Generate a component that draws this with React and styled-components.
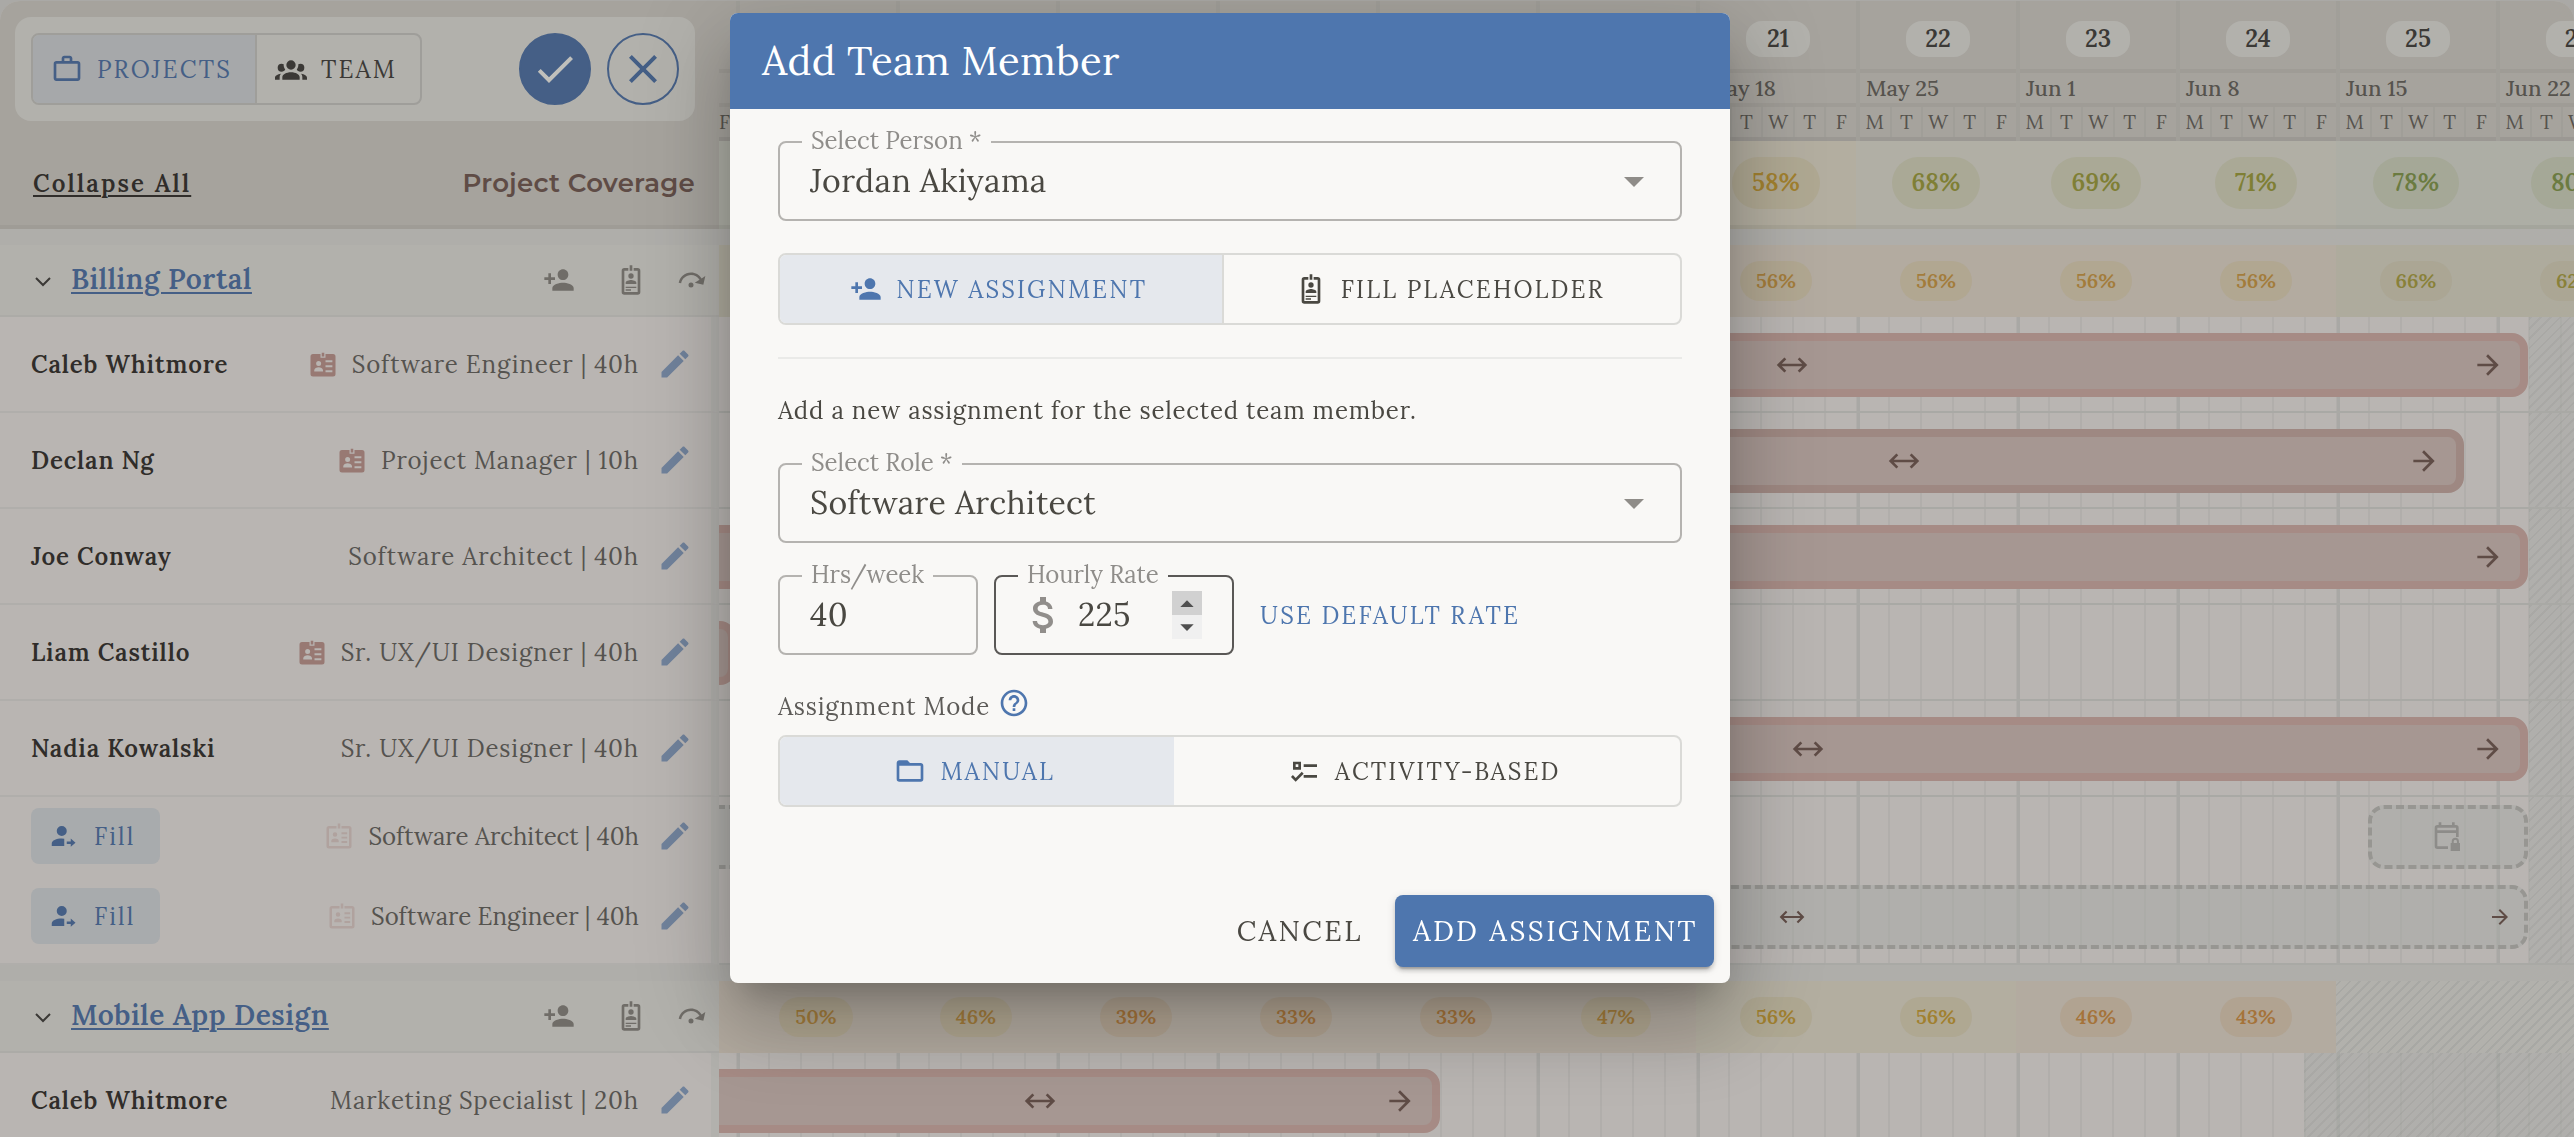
import styled, { createGlobalStyle } from "styled-components";
import {
    MdArrowForward,
    MdAttachMoney,
    MdCheck,
    MdClose,
    MdHelpOutline,
    MdPersonAdd,
    MdWorkOutline,
} from "react-icons/md";

const weeks = [
    ["15", "Apr 6"], ["16", "Apr 13"], ["17", "Apr 20"], ["18", "Apr 27"],
    ["19", "May 4"], ["20", "May 11"], ["21", "May 18"], ["22", "May 25"], ["23", "Jun 1"],
    ["24", "Jun 8"], ["25", "Jun 15"], ["26", "Jun 22"],
];

const days = ["M", "T", "W", "T", "F"];

const tones = {
    orange: { color: "#a5733a", pill: "#b1a391", cell: "#b3aba0" },
    amber: { color: "#a37c3b", pill: "#b1a791", cell: "#b3aba0" },
    gold: { color: "#a1802f", pill: "#afa892", cell: "#b3aea0" },
    olive: { color: "#898139", pill: "#aba694", cell: "#aeab9d" },
    lime: { color: "#7f7f35", pill: "#aaa996", cell: "#b1afa5" },
    green: { color: "#6b7b41", pill: "#a5a897", cell: "#adaea5" },
};

const coverage = [
    [64, "green"], [60, "lime"], [60, "lime"], [58, "gold"], [57, "gold"], [58, "gold"],
    [58, "gold"], [68, "lime"], [69, "lime"], [71, "lime"], [78, "green"], [80, "green"],
];

const billingCoverage = [
    [62, "olive"], [62, "olive"], [56, "amber"], [56, "amber"], [56, "amber"], [56, "amber"],
    [56, "amber"], [56, "amber"], [56, "amber"], [56, "amber"], [66, "olive"], [62, "olive"],
];

const mobileCoverage = [
    [50, "amber"], [46, "amber"], [39, "orange"], [33, "orange"], [33, "orange"], [47, "amber"],
    [56, "gold"], [56, "gold"], [46, "orange"], [43, "orange"],
];

const billingTeam = [
    { name: "Caleb Whitmore", role: "Software Engineer | 40h", badge: true, bar: { left: 337, end: 1809 } },
    { name: "Declan Ng", role: "Project Manager | 10h", badge: true, bar: { left: 625, end: 1745, muted: true } },
    { name: "Joe Conway", role: "Software Architect | 40h", bar: { left: -60, end: 1809 } },
    { name: "Liam Castillo", role: "Sr. UX/UI Designer | 40h", badge: true, bar: { left: -300, end: 17 } },
    { name: "Nadia Kowalski", role: "Sr. UX/UI Designer | 40h", bar: { left: 369, end: 1809 } },
];

const mobileTeam = [
    { name: "Caleb Whitmore", role: "Marketing Specialist | 20h", bar: { left: -79, end: 721 } },
];

const iconPaths = {
    group: "M12 5.5A3.5 3.5 0 0 1 15.5 9A3.5 3.5 0 0 1 12 12.5A3.5 3.5 0 0 1 8.5 9A3.5 3.5 0 0 1 12 5.5M5 8C5.56 8 6.08 8.15 6.53 8.42C6.38 9.85 6.8 11.27 7.66 12.38C7.16 13.34 6.16 14 5 14A3 3 0 0 1 2 11A3 3 0 0 1 5 8M19 8A3 3 0 0 1 22 11A3 3 0 0 1 19 14C17.84 14 16.84 13.34 16.34 12.38C17.2 11.27 17.62 9.85 17.47 8.42C17.92 8.15 18.44 8 19 8M5.5 18.25C5.5 16.18 8.41 14.5 12 14.5C15.59 14.5 18.5 16.18 18.5 18.25V20H5.5V18.25M0 20V18.5C0 17.11 1.89 15.94 4.45 15.6C3.86 16.28 3.5 17.22 3.5 18.25V20H0M24 20H20.5V18.25C20.5 17.22 20.14 16.28 19.55 15.6C22.11 15.94 24 17.11 24 18.5V20Z",
    badge: "M17 3H14V5H17V21H7V5H10V3H7A2 2 0 0 0 5 5V21A2 2 0 0 0 7 23H17A2 2 0 0 0 19 21V5A2 2 0 0 0 17 3M12 7A2 2 0 0 1 14 9A2 2 0 0 1 12 11A2 2 0 0 1 10 9A2 2 0 0 1 12 7M16 15H8V14C8 12.67 10.67 12 12 12C13.33 12 16 12.67 16 14V15M16 18H8V17H16V18M12 20H8V19H12V20M13 5H11V1H13V5Z",
    stepOver: "M12 14A2 2 0 0 1 14 16A2 2 0 0 1 12 18A2 2 0 0 1 10 16A2 2 0 0 1 12 14M23.46 8.86L21.87 15.75L15 14.16L18.8 11.78C17.39 9.5 14.87 8 12 8C8.05 8 4.77 10.86 4.12 14.63L2.15 14.28C2.96 9.58 7.06 6 12 6C15.58 6 18.73 7.89 20.5 10.72L23.46 8.86Z",
    pencil: "M20.71 7.04C21.1 6.65 21.1 6 20.71 5.63L18.37 3.29C18 2.9 17.35 2.9 16.96 3.29L15.12 5.12L18.87 8.87M3 17.25V21H6.75L17.81 9.93L14.06 6.18L3 17.25Z",
    folder: "M20 18H4V8H20M20 6H12L10 4H4C2.89 4 2 4.89 2 6V18A2 2 0 0 0 4 20H20A2 2 0 0 0 22 18V8C22 6.89 21.1 6 20 6Z",
    checks: "M3 5H9V11H3V5M5 7V9H7V7H5M11 7H21V9H11V7M11 15H21V17H11V15M5 20L1.5 16.5L2.91 15.09L5 17.17L9.59 12.59L11 14L5 20Z",
    assign: "M11 4A4 4 0 0 1 11 12A4 4 0 0 1 11 4M3 20V18C3 15.6 6.6 14 11 14L13 14.1V20H3M15 16.3H18.2V14L22 17.3L18.2 20.6V18.3H15Z",
    idCard: "M13 3V6H11V3H13M4 4H10V7H14V4H20A2 2 0 0 1 22 6V20A2 2 0 0 1 20 22H4A2 2 0 0 1 2 20V6A2 2 0 0 1 4 4M14 9V10.6H19.5V9H14M14 13V14.6H19.5V13H14M14 17V18.6H19.5V17H14M8.5 9.5A2 2 0 0 0 8.5 13.5A2 2 0 0 0 8.5 9.5M5 18H12V17C12 15.6 10 14.6 8.5 14.6C7 14.6 5 15.6 5 17V18Z",
    idCardOutline: "M13 2V6H11V2H13M4 4H10V6H4V20H20V6H14V4H20A2 2 0 0 1 22 6V20A2 2 0 0 1 20 22H4A2 2 0 0 1 2 20V6A2 2 0 0 1 4 4M14 9H18.5V10.5H14V9M14 12.5H18.5V14H14V12.5M14 16H18.5V17.5H14V16M8.8 9A1.8 1.8 0 0 1 8.8 12.6A1.8 1.8 0 0 1 8.8 9M5.8 17V16C5.8 14.6 7.6 14 8.8 14C10 14 11.8 14.6 11.8 16V17Z",
    calendarLock: "M5 1H7V3H15V1H17V3H18A2 2 0 0 1 20 5V12H18V9H4V19H12V21H4A2 2 0 0 1 2 19V5A2 2 0 0 1 4 3H5V1M4 5V7H18V5H4M17.5 12.5A2.7 2.7 0 0 1 20.2 15.2V16.5H21V22.5H14V16.5H14.8V15.2A2.7 2.7 0 0 1 17.5 12.5M17.5 14A1.2 1.2 0 0 0 16.3 15.2V16.5H18.7V15.2A1.2 1.2 0 0 0 17.5 14Z",
    caretDown: "M7 10L12 15L17 10Z",
    caretUp: "M7 15L12 10L17 15Z",
};

function Icon({ name, size = 32 }) {
    return (
        <svg width={size} height={size} viewBox="0 0 24 24" fill="currentColor" fillRule="evenodd" aria-hidden="true">
            <path d={iconPaths[name]} />
        </svg>
    );
}

function ResizeIcon({ size = 32 }) {
    return (
        <svg width={size} height={size} viewBox="0 0 24 24" fill="none" stroke="currentColor" strokeWidth="2" aria-hidden="true">
            <path d="M2 12H22M7 7L2 12L7 17M17 7L22 12L17 17" />
        </svg>
    );
}

function Bar({ left, end, muted }) {
    return (
        <StyledBar $muted={muted} style={{ left, width: end - left }}>
            <ResizeIcon />
            <MdArrowForward size={32} />
        </StyledBar>
    );
}

function CoverageRow({ cells, large, ended }) {
    return (
        <CoverageTrack $ended={ended}>
            <CoverageCell $tone={tones[cells[0][1]]} $large={large} $partial />
            {cells.map(([value, tone], i) => (
                <CoverageCell key={i} $tone={tones[tone]} $large={large}>
                    <CoveragePill $tone={tones[tone]} $large={large}>{value}%</CoveragePill>
                </CoverageCell>
            ))}
        </CoverageTrack>
    );
}

function ProjectRow({ name, cells, ended }) {
    return (
        <Row>
            <ProjectCell>
                <ChevronButton aria-label={`Collapse ${name}`}>
                    <svg width="16" height="16" viewBox="0 0 16 16" fill="none" stroke="currentColor" strokeWidth="2">
                        <path d="M1 4L8 11L15 4" />
                    </svg>
                </ChevronButton>
                <ProjectLink href="#project">{name}</ProjectLink>
                <PlainButton aria-label="Add team member"><MdPersonAdd size={32} /></PlainButton>
                <BadgeButton aria-label="Add placeholder"><Icon name="badge" /></BadgeButton>
                <PlainButton aria-label="Shift project"><Icon name="stepOver" size={30} /></PlainButton>
            </ProjectCell>
            <CoverageRow cells={cells} ended={ended} />
        </Row>
    );
}

function MemberRow({ name, role, badge, bar, closedFrom }) {
    return (
        <Row>
            <MemberCell>
                <MemberName>{name}</MemberName>
                {badge && <BadgeMark><Icon name="idCard" size={30} /></BadgeMark>}
                <MemberRole>{role}</MemberRole>
                <EditButton aria-label={`Edit ${name}`}><Icon name="pencil" size={36} /></EditButton>
            </MemberCell>
            <Track>
                <Closed style={{ left: closedFrom }} />
                <Bar {...bar} />
            </Track>
        </Row>
    );
}

function FillRow({ role }) {
    return (
        <FillLine>
            <FillButton><Icon name="assign" size={30} />Fill</FillButton>
            <BadgeMark $faint><Icon name="idCardOutline" size={30} /></BadgeMark>
            <MemberRole $tight>{role}</MemberRole>
            <EditButton aria-label={`Edit ${role}`}><Icon name="pencil" size={36} /></EditButton>
        </FillLine>
    );
}

function SelectField({ id, label, value }) {
    return (
        <Field>
            <FieldLabel htmlFor={id}>{label}</FieldLabel>
            <Select id={id} defaultValue={value}>
                <option>{value}</option>
            </Select>
            <Caret><Icon name="caretDown" size={48} /></Caret>
        </Field>
    );
}

function AddMemberDialog() {
    return (
        <Backdrop>
            <Dialog role="dialog" aria-labelledby="dialog-title">
                <DialogTitle id="dialog-title">Add Team Member</DialogTitle>
                <DialogBody>
                    <SelectField id="person" label="Select Person *" value="Jordan Akiyama" />
                    <ToggleGroup $wide>
                        <Toggle $active $wide><MdPersonAdd size={32} />NEW ASSIGNMENT</Toggle>
                        <Toggle $wide><Icon name="badge" />FILL PLACEHOLDER</Toggle>
                    </ToggleGroup>
                    <Divider />
                    <Hint>Add a new assignment for the selected team member.</Hint>
                    <SelectField id="role" label="Select Role *" value="Software Architect" />
                    <RateRow>
                        <Field $width="200px">
                            <FieldLabel htmlFor="hours">Hrs/week</FieldLabel>
                            <NumberInput id="hours" type="number" defaultValue="40" />
                        </Field>
                        <Field $width="240px" $hovered>
                            <FieldLabel htmlFor="rate">Hourly Rate</FieldLabel>
                            <Currency><MdAttachMoney size={48} /></Currency>
                            <NumberInput id="rate" type="number" defaultValue="225" $rate />
                            <Spinner>
                                <SpinButton $pressed aria-label="Increase rate"><Icon name="caretUp" /></SpinButton>
                                <SpinButton aria-label="Decrease rate"><Icon name="caretDown" /></SpinButton>
                            </Spinner>
                        </Field>
                        <TextButton>USE DEFAULT RATE</TextButton>
                    </RateRow>
                    <ModeLabel>
                        Assignment Mode
                        <HelpButton aria-label="About assignment modes"><MdHelpOutline size={32} /></HelpButton>
                    </ModeLabel>
                    <ToggleGroup $wide>
                        <Toggle $active $wide $seamless><Icon name="folder" />MANUAL</Toggle>
                        <Toggle $wide><Icon name="checks" />ACTIVITY-BASED</Toggle>
                    </ToggleGroup>
                </DialogBody>
                <DialogActions>
                    <ActionButton>CANCEL</ActionButton>
                    <ActionButton $primary>ADD ASSIGNMENT</ActionButton>
                </DialogActions>
            </Dialog>
        </Backdrop>
    );
}

function App() {
    return (
        <Page>
            <GlobalStyle />
            <Board>
                <Row>
                    <SideHeader>
                        <Toolbar>
                            <ToggleGroup>
                                <Toggle $active><MdWorkOutline size={32} />PROJECTS</Toggle>
                                <Toggle><Icon name="group" />TEAM</Toggle>
                            </ToggleGroup>
                            <RoundButtons>
                                <RoundButton $filled aria-label="Save"><MdCheck size={48} /></RoundButton>
                                <RoundButton aria-label="Discard"><MdClose size={48} /></RoundButton>
                            </RoundButtons>
                        </Toolbar>
                        <CoverageHeading>
                            <CollapseButton>Collapse All</CollapseButton>
                            <h2>Project Coverage</h2>
                        </CoverageHeading>
                    </SideHeader>
                    <TimelineHeader>
                        <WeekStrip>
                            <PartialWeek>
                                <WeekNumber />
                                <WeekDate />
                                <WeekDays>F</WeekDays>
                            </PartialWeek>
                            {weeks.map(([number, date]) => (
                                <Week key={number}>
                                    <WeekNumber><span>{number}</span></WeekNumber>
                                    <WeekDate>{date}</WeekDate>
                                    <WeekDays>
                                        {days.map((d, i) => <span key={i}>{d}</span>)}
                                    </WeekDays>
                                </Week>
                            ))}
                        </WeekStrip>
                        <CoverageRow cells={coverage} large />
                    </TimelineHeader>
                </Row>

                <Gap />
                <ProjectRow name="Billing Portal" cells={billingCoverage} />
                {billingTeam.map(m => <MemberRow key={m.name} {...m} closedFrom={1810} />)}
                <Row>
                    <FillCell>
                        <FillRow role="Software Architect | 40h" />
                        <FillRow role="Software Engineer | 40h" />
                    </FillCell>
                    <Track>
                        <Closed style={{ left: 1810 }} />
                        <PlaceholderTracks>
                            <PlaceholderLine>
                                <PlaceholderBar style={{ left: -78, width: 400 }} />
                                <PlaceholderBar $locked style={{ left: 1649, width: 160 }}>
                                    <Icon name="calendarLock" />
                                </PlaceholderBar>
                            </PlaceholderLine>
                            <PlaceholderLine>
                                <PlaceholderBar style={{ left: 337, width: 1472 }}>
                                    <ResizeIcon size={26} />
                                    <MdArrowForward size={24} />
                                </PlaceholderBar>
                            </PlaceholderLine>
                        </PlaceholderTracks>
                    </Track>
                </Row>

                <Gap />
                <ProjectRow name="Mobile App Design" cells={mobileCoverage} ended />
                {mobileTeam.map(m => <MemberRow key={m.name} {...m} closedFrom={1585} />)}
            </Board>
            <AddMemberDialog />
        </Page>
    );
}

export default App;

const GlobalStyle = createGlobalStyle`
    * {
        box-sizing: border-box;
    }

    body {
        margin: 0;
        font-family: Lora, "Liberation Serif", serif;
        font-size: 24px;
    }

    button, input, select {
        font: inherit;
        color: inherit;
    }

    button {
        padding: 0;
        border: 0;
        background: none;
        letter-spacing: 0.09em;
        cursor: pointer;
    }

    svg {
        display: block;
        flex-shrink: 0;
    }
`;

const Page = styled.div`
    height: 100vh;
    overflow: hidden;
    padding-top: 1px;
    background: #aaa9a6;
    color: #302d2a;
`;

const Board = styled.div`
    overflow: hidden;
    border-radius: 20px 20px 0 0;
    background: #b9b5b2;
`;

const Row = styled.div`
    display: flex;
`;

const Gap = styled.div`
    height: 16px;
    background: #afaeaa;
`;

const SideHeader = styled.div`
    flex: 0 0 719px;
    padding: 16px 24px 0 15px;
    background: #a6a39d;
    border-bottom: 4px solid #9f9c96;
`;

const Toolbar = styled.div`
    display: flex;
    justify-content: space-between;
    padding: 16px;
    border-radius: 16px;
    background: #b2b1ac;
`;

const ToggleGroup = styled.div`
    display: flex;
    height: 72px;
    border: 2px solid ${p => (p.$wide ? "#dadad7" : "#9f9e9a")};
    border-radius: 8px;
    overflow: hidden;
`;

const Toggle = styled.button`
    display: flex;
    flex: ${p => (p.$wide ? "1 1 auto" : "0 0 auto")};
    align-items: center;
    justify-content: center;
    gap: 14px;
    padding: 0 23px 0 18px;
    color: ${p => (p.$active ? (p.$wide ? "#4e76ae" : "#455f86") : (p.$wide ? "#4a4842" : "#3b3936"))};
    background: ${p => (p.$active ? (p.$wide ? "#e5e8ed" : "#a6a8aa") : "transparent")};

    &:first-child {
        border-right: ${p => (p.$seamless ? "0" : p.$wide ? "2px solid #dadad7" : "2px solid #9f9e9a")};
    }
`;

const RoundButtons = styled.div`
    display: flex;
    gap: 16px;
`;

const RoundButton = styled.button`
    display: flex;
    align-items: center;
    justify-content: center;
    width: 72px;
    height: 72px;
    border: 2px solid #455f86;
    border-radius: 50%;
    color: ${p => (p.$filled ? "#c0c0bc" : "#455f86")};
    background: ${p => (p.$filled ? "#455f86" : "transparent")};
`;

const CoverageHeading = styled.div`
    display: flex;
    align-items: center;
    justify-content: space-between;
    height: 104px;
    padding: 20px 0 0 18px;

    h2 {
        margin: 0;
        font-family: Montserrat, Inter, sans-serif;
        font-size: 26px;
        font-weight: 600;
        letter-spacing: 0.01em;
        color: #5f4c46;
    }
`;

const CollapseButton = styled.button`
    font-weight: 600;
    text-decoration: underline;
    text-decoration-thickness: 2px;
    text-underline-offset: 3px;
`;

const TimelineHeader = styled.div`
    flex: 1;
    min-width: 0;
    overflow: hidden;
    background: #a6a39d;
`;

const WeekStrip = styled.div`
    display: flex;
    color: #56534e;
`;

const Week = styled.div`
    flex: 0 0 160px;
    border-left: 4px solid #a19f99;
`;

// last day of the week that is scrolled out on the left
const PartialWeek = styled.div`
    flex: 0 0 17px;
`;

const WeekNumber = styled.div`
    display: flex;
    align-items: center;
    justify-content: center;
    height: 72px;
    padding-top: 8px;
    border-bottom: 4px solid #9f9c96;
    color: #3b3936;
    font-weight: 600;

    span {
        width: 64px;
        line-height: 36px;
        border-radius: 16px;
        text-align: center;
        background: #b2b1ac;
    }
`;

const WeekDate = styled.div`
    height: 34px;
    padding-left: 6px;
    border-bottom: 4px solid #9f9c96;
    font-size: 22px;
    font-weight: 500;
    line-height: 30px;
`;

const WeekDays = styled.div`
    display: flex;
    height: 34px;
    border-bottom: 4px solid #9b9893;
    font-size: 20px;
    line-height: 30px;

    span {
        flex: 1 1 0;
        text-align: center;
    }

    span + span {
        border-left: 2px solid #a09e98;
    }
`;

const CoverageTrack = styled.div`
    display: flex;
    flex: 1;
    min-width: 0;
    overflow: hidden;
    background: ${p => (p.$ended
        ? "repeating-linear-gradient(-45deg, #b2b1ac 0 5px, #a8a8a4 5px 7px)"
        : "#b2b1ac")};
`;

const CoverageCell = styled.div`
    display: flex;
    flex: 0 0 ${p => (p.$partial ? 17 : 160)}px;
    align-items: center;
    justify-content: center;
    height: ${p => (p.$large ? 88 : 72)}px;
    border-bottom: ${p => (p.$large ? "4px solid rgba(0, 0, 0, 0.05)" : "0")};
    background: ${p => p.$tone.cell};
`;

const CoveragePill = styled.span`
    padding: 0 ${p => (p.$large ? 20 : 16)}px;
    border-radius: ${p => (p.$large ? 26 : 20)}px;
    font-size: ${p => (p.$large ? 24 : 20)}px;
    font-weight: 600;
    line-height: ${p => (p.$large ? 52 : 40)}px;
    color: ${p => p.$tone.color};
    background: ${p => p.$tone.pill};
`;

const ProjectCell = styled.div`
    display: flex;
    flex: 0 0 719px;
    align-items: center;
    height: 72px;
    padding: 0 13px 0 35px;
    border-bottom: 2px solid #acaba7;
    background: #b2b1ac;
    color: #706d68;
`;

const PlainButton = styled.button`
    display: flex;
    align-items: center;
    justify-content: center;
`;

const ChevronButton = styled(PlainButton)`
    margin-right: 20px;
    padding-top: 4px;
    color: #3b3936;
`;

const BadgeButton = styled(PlainButton)`
    margin: 0 29px 0 40px;
`;

const ProjectLink = styled.a`
    margin-right: auto;
    padding-bottom: 2px;
    font-size: 28px;
    font-weight: 600;
    line-height: 40px;
    letter-spacing: 0.02em;
    color: #455f86;
    text-decoration-thickness: 2px;
    text-underline-offset: 3px;
`;

const MemberCell = styled.div`
    display: flex;
    flex: 0 0 719px;
    align-items: center;
    height: 96px;
    padding: 0 18px 0 31px;
    border-bottom: 2px solid #b0aeab;
    border-right: 8px solid #b2b1ad;
`;

const MemberName = styled.span`
    margin-right: auto;
    font-weight: 600;
    letter-spacing: 0.035em;
`;

const MemberRole = styled.span`
    letter-spacing: ${p => (p.$tight ? "normal" : "0.035em")};
    color: #55534f;
`;

const BadgeMark = styled.span`
    margin: 0 14px 0 auto;
    color: ${p => (p.$faint ? "#b0a29e" : "#987973")};
`;

const EditButton = styled(PlainButton)`
    margin-left: 18px;
    color: #70829b;
`;

const FillCell = styled.div`
    display: flex;
    flex: 0 0 719px;
    flex-direction: column;
    gap: 24px;
    padding: 11px 18px 19px 31px;
    border-bottom: 2px solid #b0aeab;
    border-right: 8px solid #b2b1ad;
`;

const FillLine = styled.div`
    display: flex;
    align-items: center;
`;

const FillButton = styled.button`
    display: flex;
    align-items: center;
    gap: 16px;
    width: 129px;
    height: 56px;
    padding-left: 17px;
    border-radius: 8px;
    color: #455f86;
    background: #a8abad;
`;

const Track = styled.div`
    position: relative;
    flex: 1;
    min-width: 0;
    overflow: hidden;
    border-bottom: 2px solid #a9a9a5;
    background-image:
        linear-gradient(90deg, #a9a8a5 3px, transparent 3px),
        linear-gradient(90deg, #b1aeab 2px, transparent 2px);
    background-position: 18px 0, 17px 0;
    background-size: 160px 100%, 32px 100%;
`;

const Closed = styled.div`
    position: absolute;
    top: 0;
    right: 0;
    bottom: 0;
    background:
        repeating-linear-gradient(-45deg, transparent 0 5px, rgba(0, 0, 0, 0.04) 5px 7px),
        rgba(168, 169, 165, 0.5);
`;

const StyledBar = styled.div`
    position: absolute;
    top: 16px;
    display: grid;
    grid-template-columns: 1fr auto 1fr;
    align-items: center;
    height: 64px;
    padding: 0 16px;
    border: 8px solid ${p => (p.$muted ? "#9e8882" : "#a68b85")};
    border-radius: 16px;
    background: #a69792;
    color: #5f4c46;

    svg:first-child {
        grid-column: 2;
    }

    svg:last-child {
        justify-self: end;
    }
`;

const PlaceholderTracks = styled.div`
    display: grid;
    gap: 16px;
    padding: 8px 0;
`;

const PlaceholderLine = styled.div`
    position: relative;
    height: 64px;
`;

const PlaceholderBar = styled.div`
    position: absolute;
    display: grid;
    grid-template-columns: 1fr auto 1fr;
    align-items: center;
    height: 64px;
    padding: 0 12px;
    border: 4px dashed #979692;
    border-radius: 16px;
    background: rgba(168, 169, 165, 0.5);
    color: ${p => (p.$locked ? "#8d8c89" : "#5f4c46")};

    svg:first-child {
        grid-column: 2;
    }

    svg + svg {
        justify-self: end;
    }
`;

const Backdrop = styled.div`
    position: fixed;
    inset: 0;
    display: flex;
    align-items: flex-start;
    justify-content: center;
    padding: 13px 0 0;
`;

const Dialog = styled.div`
    width: 1000px;
    max-width: 100%;
    margin-right: 114px;
    overflow: hidden;
    border-radius: 8px;
    background: #f9f8f6;
    color: #4a4842;
    box-shadow:
        0 22px 30px -14px rgba(0, 0, 0, 0.2),
        0 48px 76px 6px rgba(0, 0, 0, 0.14),
        0 18px 92px 16px rgba(0, 0, 0, 0.12);
`;

const DialogTitle = styled.h1`
    margin: 0;
    padding: 0 32px;
    font-size: 40px;
    font-weight: 400;
    line-height: 96px;
    letter-spacing: 0.01em;
    color: #fff;
    background: #4e76ae;
`;

const DialogBody = styled.div`
    display: flex;
    flex-direction: column;
    gap: 32px;
    padding: 32px 48px 0;
`;

const Field = styled.div`
    position: relative;
    display: flex;
    align-items: center;
    width: ${p => p.$width || "auto"};
    height: 80px;
    border: 2px solid ${p => (p.$hovered ? "#5a5856" : "#b5b3b0")};
    border-radius: 8px;
`;

const FieldLabel = styled.label`
    position: absolute;
    top: -16px;
    left: 22px;
    padding: 0 9px;
    line-height: 28px;
    color: #8f8d8a;
    background: #f9f8f6;
`;

const Select = styled.select`
    width: 100%;
    height: 76px;
    padding: 0 30px 2px;
    border: 0;
    appearance: none;
    font-size: 32px;
    letter-spacing: 0.01em;
    background: transparent;
`;

const Caret = styled.span`
    position: absolute;
    right: 22px;
    color: #8f8c88;
    pointer-events: none;
`;

const NumberInput = styled.input`
    width: ${p => (p.$rate ? "94px" : "100%")};
    height: 76px;
    padding: 0 0 2px ${p => (p.$rate ? 0 : 30)}px;
    border: 0;
    outline: 0;
    appearance: textfield;
    font-size: 32px;
    letter-spacing: 0.01em;
    background: transparent;

    &::-webkit-inner-spin-button {
        appearance: none;
    }
`;

const Currency = styled.span`
    margin: 0 10px 0 24px;
    color: #918e8b;
`;

const Spinner = styled.span`
    display: flex;
    flex-direction: column;
    width: 30px;
`;

const SpinButton = styled.button`
    display: flex;
    align-items: center;
    justify-content: center;
    height: 24px;
    color: #4f4f4f;
    background: ${p => (p.$pressed ? "#d1d1d1" : "#f0f0f0")};
`;

const Divider = styled.hr`
    width: 100%;
    height: 2px;
    margin: 0;
    border: 0;
    background: #eaeae8;
`;

const Hint = styled.p`
    margin: 2px 0;
    line-height: 36px;
    letter-spacing: 0.035em;
`;

const RateRow = styled.div`
    display: flex;
    align-items: center;
    gap: 16px;
`;

const TextButton = styled.button`
    padding: 0 10px;
    color: #4e76ae;
`;

const ModeLabel = styled.div`
    display: flex;
    align-items: center;
    gap: 8px;
    height: 38px;
    margin-bottom: -22px;
    letter-spacing: 0.035em;
    color: #5d5b58;
`;

const HelpButton = styled(PlainButton)`
    padding-bottom: 6px;
    color: #4e76ae;
`;

const DialogActions = styled.div`
    display: flex;
    justify-content: flex-end;
    gap: 16px;
    padding: 88px 16px 16px;
`;

const ActionButton = styled.button`
    height: 72px;
    padding: 0 16px 0 18px;
    border-radius: 8px;
    font-size: 28px;
    color: ${p => (p.$primary ? "#fff" : "#4a4842")};
    background: ${p => (p.$primary ? "#4e76ae" : "transparent")};
    box-shadow: ${p => (p.$primary ? "0 6px 2px -4px rgba(0, 0, 0, 0.2), 0 4px 4px rgba(0, 0, 0, 0.14), 0 2px 10px rgba(0, 0, 0, 0.12)" : "none")};
`;
